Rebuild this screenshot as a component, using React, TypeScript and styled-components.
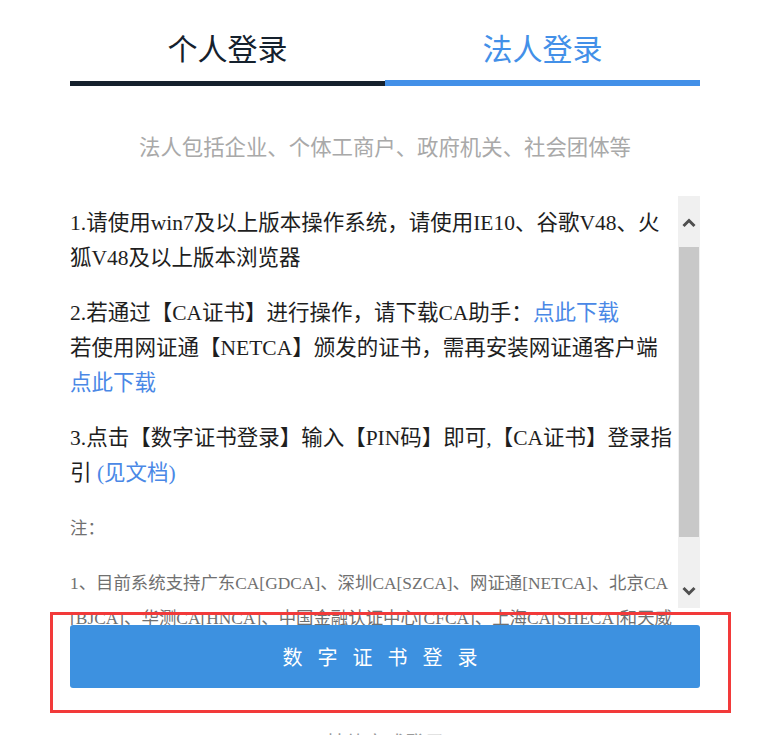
import styled, { createGlobalStyle } from 'styled-components';

const GlobalStyle = createGlobalStyle`
  body {
    margin: 0;
    background: #fff;
    font-family: "Liberation Serif", "Noto Sans CJK SC", serif;
  }
`;

const tabs = [
  { label: '个人登录', active: false },
  { label: '法人登录', active: true },
];

const Chevron = ({ down }: { down?: boolean }) => (
  <svg width="14" height="10" viewBox="0 0 14 10">
    <polyline
      points={down ? '1.5,2 7,7.5 12.5,2' : '1.5,8 7,2.5 12.5,8'}
      fill="none"
      stroke="#4f4f4f"
      strokeWidth="3"
    />
  </svg>
);

export default function App() {
  return (
    <Page>
      <GlobalStyle />
      <Column>
        <TabRow>
          {tabs.map(tab => (
            <Tab key={tab.label} $active={tab.active}>
              {tab.label}
            </Tab>
          ))}
        </TabRow>
        <Subtitle>法人包括企业、个体工商户、政府机关、社会团体等</Subtitle>
        <Notice>
          <NoticeText>
            <Para>1.请使用win7及以上版本操作系统，请使用IE10、谷歌V48、火狐V48及以上版本浏览器</Para>
            <Para>
              2.若通过【CA证书】进行操作，请下载CA助手：<Link>点此下载</Link>
              <br />
              若使用网证通【NETCA】颁发的证书，需再安装网证通客户端<Link>点此下载</Link>
            </Para>
            <Para>
              3.点击【数字证书登录】输入【PIN码】即可,【CA证书】登录指引 <Link>(见文档)</Link>
            </Para>
            <Note>注：</Note>
            <Note>
              1、目前系统支持广东CA[GDCA]、深圳CA[SZCA]、网证通[NETCA]、北京CA<wbr />[BJCA]、华测CA[HNCA]、中国金融认证中心[CFCA]、上海CA[SHECA]和天威诚信[iTrusCA]等数字证书。
            </Note>
          </NoticeText>
          <Scrollbar>
            <ArrowUp>
              <Chevron />
            </ArrowUp>
            <Thumb />
            <TrackRest />
            <ArrowDown>
              <Chevron down />
            </ArrowDown>
          </Scrollbar>
        </Notice>
        <LoginButton>数字证书登录</LoginButton>
        <Footer>其他方式登录</Footer>
      </Column>
      <Highlight />
    </Page>
  );
}

const Page = styled.div`
  position: relative;
  width: 776px;
  height: 735px;
  overflow: hidden;
`;

const Column = styled.div`
  width: 630px;
  margin-left: 70px;
  display: flex;
  flex-direction: column;
`;

const TabRow = styled.div`
  display: flex;
`;

const Tab = styled.div<{ $active: boolean }>`
  flex: 1;
  text-align: center;
  font-family: "Noto Sans CJK SC", sans-serif;
  font-size: 30px;
  line-height: 40px;
  padding-top: 27px;
  padding-bottom: ${p => (p.$active ? 13 : 14)}px;
  color: ${p => (p.$active ? '#4390e8' : '#15212d')};
  border-bottom: ${p => (p.$active ? '6px solid #4390e8' : '5px solid #15212d')};
`;

const Subtitle = styled.div`
  margin-top: 45px;
  text-align: center;
  font-family: "Noto Sans CJK SC", sans-serif;
  font-size: 21.4px;
  line-height: 30px;
  color: #a9a9a9;
`;

const Notice = styled.div`
  margin-top: 35px;
  height: 429px;
  overflow: hidden;
  display: flex;
  justify-content: space-between;
`;

const NoticeText = styled.div`
  width: 606px;
  padding-top: 10px;
`;

const Para = styled.p`
  margin: 0 0 20px;
  font-size: 21.5px;
  line-height: 35px;
  color: #1e1e1e;
`;

const Note = styled.p`
  margin: 0 0 20px;
  font-size: 17.4px;
  line-height: 35px;
  color: #707070;
`;

const Link = styled.span`
  color: #4a88e6;
`;

const Scrollbar = styled.div`
  width: 22px;
  height: 412px;
  background: #f0f0f0;
  display: flex;
  flex-direction: column;
  align-items: center;
`;

const ArrowUp = styled.div`
  height: 51px;
  padding-top: 22px;
  box-sizing: border-box;
  display: flex;
  justify-content: center;
`;

const Thumb = styled.div`
  width: 20px;
  height: 290px;
  background: #c8c8c8;
`;

const TrackRest = styled.div`
  flex: 1;
`;

const ArrowDown = styled.div`
  height: 22px;
  display: flex;
  justify-content: center;
  align-items: flex-start;
`;

const LoginButton = styled.button`
  height: 63px;
  border: none;
  border-radius: 3px;
  background: #3d91e0;
  color: #fff;
  font-family: "Noto Sans CJK SC", sans-serif;
  font-size: 20px;
  letter-spacing: 15px;
  padding: 0 0 0 5px;
  cursor: pointer;
`;

const Footer = styled.div`
  margin-top: 45px;
  text-align: center;
  font-family: "Noto Sans CJK SC", sans-serif;
  font-size: 20px;
  line-height: 20px;
  color: #999;
`;

const Highlight = styled.div`
  position: absolute;
  left: 50px;
  top: 612px;
  width: 681px;
  height: 101px;
  box-sizing: border-box;
  border: 3px solid #f23a3a;
  pointer-events: none;
`;
